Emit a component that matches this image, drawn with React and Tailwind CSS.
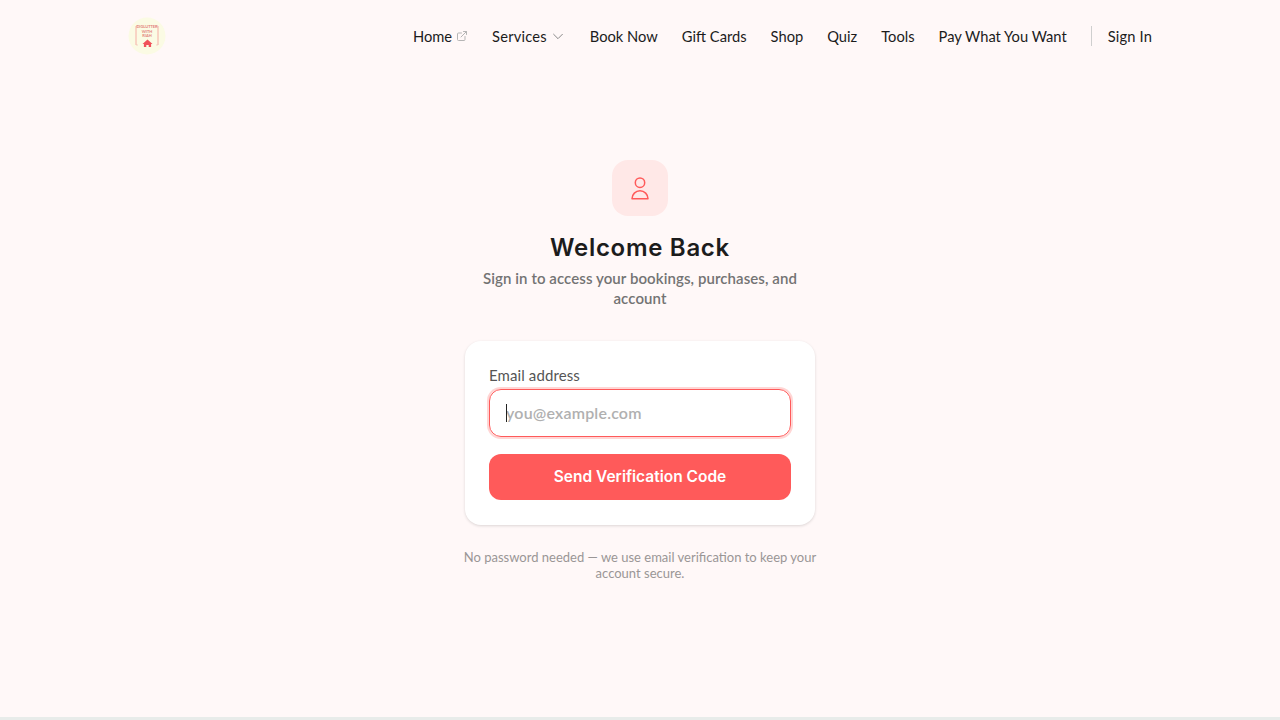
import { ExternalLink } from "lucide-react";

const navFont = "font-['Lato','Liberation_Sans',sans-serif]";
const headFont = "font-['Inter','Liberation_Sans',sans-serif]";

/* logo: round badge with a small house */
const Logo = () => (
  <svg width="40" height="40" viewBox="0 0 40 40" className="-ml-[1px] mt-[2px]">
    <circle cx="20" cy="19" r="18.5" fill="#fbfbe4" />
    <path d="M9 9v19M31 9v19" fill="none" stroke="#f4a59e" strokeWidth="0.9" />
    <path d="M9 9h2M31 9h-2M9 28h2M31 28h-2" fill="none" stroke="#f4b5ae" strokeWidth="0.6" />
    <text x="20" y="11" textAnchor="middle" fontSize="3.9" fontWeight="700" fill="#e2807a" fontFamily="Lato, sans-serif">DIGLUTTER</text>
    <text x="20" y="15.5" textAnchor="middle" fontSize="3.9" fontWeight="700" fill="#e2807a" fontFamily="Lato, sans-serif">WITH</text>
    <text x="20" y="20" textAnchor="middle" fontSize="3.9" fontWeight="700" fill="#e2807a" fontFamily="Lato, sans-serif">RIAH</text>
    <path d="M20.5 22.5l-5 4.4h1.4v3.2h2.4v-2.2h2.4v2.2h2.4v-3.2h1.4z" fill="#f0525a" />
  </svg>
);

const Header = () => (
  <header className={`h-[72px] px-[128px] flex items-center justify-between ${navFont}`}>
    <Logo />
    <nav className="flex items-center pt-px text-[14.7px] text-[#1c1c1c]">
      <a className="flex items-center gap-[4px]">
        Home <ExternalLink className="w-3 h-3 text-[#b5b5b5]" />
      </a>
      <a className="flex items-center gap-[3px] ml-6">
        <span className="tracking-[0.2px]">Services</span>
        <svg viewBox="0 0 24 24" className="w-4 h-4 text-[#8a8a8a]" fill="none" stroke="currentColor" strokeWidth="1.5">
          <path d="M19 9l-7 7-7-7" />
        </svg>
      </a>
      <a className="ml-6">Book Now</a>
      <a className="ml-6">Gift Cards</a>
      <a className="ml-6">Shop</a>
      <a className="ml-6">Quiz</a>
      <a className="ml-6">Tools</a>
      <a className="ml-6">Pay What You Want</a>
      <span className="ml-6 w-px h-5 bg-[#cfcfcf]" />
      <a className="ml-4 tracking-[0.15px]">Sign In</a>
    </nav>
  </header>
);

const App = () => (
  <div className={`h-[720px] overflow-hidden flex flex-col bg-[#fff8f8] ${navFont}`}>
    <Header />
    <main className="flex-1 pt-[88px] flex flex-col items-center">
      <div className="w-14 h-14 rounded-2xl bg-[#ffe8e7] flex items-center justify-center">
        <svg viewBox="0 0 24 24" className="w-6 h-6 text-[#ff5a5a]" fill="none" stroke="currentColor" strokeWidth="1.5">
          <circle cx="12" cy="6.7" r="4.7" />
          <path d="M4 22.8a8 8 0 0 1 16 0z" strokeLinejoin="round" />
        </svg>
      </div>
      <h1 className={`mt-4 text-2xl leading-8 font-semibold tracking-[0.7px] text-[#1c1c1c] ${headFont}`}>Welcome Back</h1>
      <p className="mt-[4px] w-[350px] text-center text-[15px] leading-5 font-semibold tracking-[0.08px] text-[#737373]">
        Sign in to access your bookings, purchases, and<br />account
      </p>
      <div className="mt-[33px] w-[350px] h-[184px] bg-white rounded-2xl p-6 shadow-[0_1px_3px_rgba(0,0,0,0.14)]">
        <label className="block text-[15px] leading-5 tracking-[0.1px] text-[#555]">Email address</label>
        <div className="relative mt-[4px]">
          <input
            readOnly
            placeholder="you@example.com"
            className="w-full h-[48px] rounded-xl border border-[#ff5a5a] ring-2 ring-[#ffd6d5] px-4 pb-[2px] text-[16px] tracking-[0.2px] font-semibold outline-none placeholder:text-[#b0b0b0]"
          />
          <span className="absolute left-[17px] top-[15px] w-px h-[18px] bg-[#222]" />
        </div>
        <button className={`mt-[17px] w-full h-[46px] rounded-xl bg-[#ff5a5a] text-white text-[15.5px] font-semibold ${headFont}`}>
          Send Verification Code
        </button>
      </div>
      <p className="mt-6 w-[360px] text-center text-[13px] leading-4 text-[#9a9696]">
        No password needed — we use email verification to keep your<br />account secure.
      </p>
    </main>
    <div className="h-[3px] bg-[#e8ecea]" />
  </div>
);

export default App;
